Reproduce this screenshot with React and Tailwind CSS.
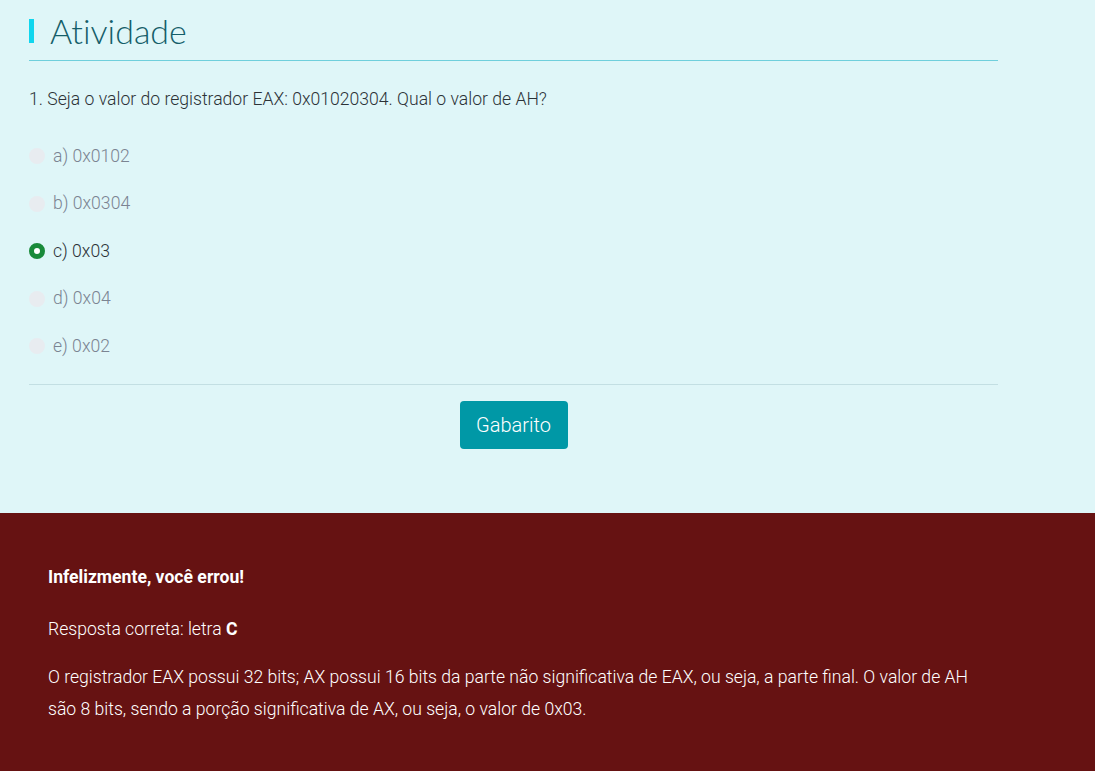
import React from "react";

const options = [
  { label: "a) 0x0102", selected: false },
  { label: "b) 0x0304", selected: false },
  { label: "c) 0x03", selected: true },
  { label: "d) 0x04", selected: false },
  { label: "e) 0x02", selected: false },
];

export default function App() {
  return (
    <div className="min-h-[771px] w-full flex flex-col bg-[#dff6f8]" style={{ fontFamily: "Roboto, 'Liberation Sans', sans-serif" }}>
      <div className="pl-[29px] pt-[11px] pb-[64px]">
        <div className="w-[969px]">
          <div className="flex items-center h-[40px] border-b border-[#6fcfdc] pb-[9px] box-content">
            <span className="w-[5px] h-[24px] bg-[#10d6ee] mr-[16px]"></span>
            <h1 className="text-[34px] leading-[40px] text-[#155e6a] [font-variant-ligatures:none]" style={{ fontFamily: "Lato, 'Open Sans', sans-serif", fontWeight: 300 }}>Atividade</h1>
          </div>
          <p className="mt-[26px] text-[17.6px] leading-[24px] font-light text-[#2c3237]">
            1. Seja o valor do registrador EAX: 0x01020304. Qual o valor de AH?
          </p>
          <div className="mt-[33px] flex flex-col gap-[23.5px] pb-[26px] border-b border-[#c3dfe3]">
            {options.map((o) => (
              <label key={o.label} className="flex items-center h-[24px]">
                {o.selected ? (
                  <span className="w-[16px] h-[16px] rounded-full border-[5px] border-[#198a3a] bg-white"></span>
                ) : (
                  <span className="w-[16px] h-[16px] rounded-full bg-[#e8ecf0]"></span>
                )}
                <span className={"ml-[8px] text-[17.6px] font-light " + (o.selected ? "text-[#2c3237]" : "text-[#7b8492]")}>{o.label}</span>
              </label>
            ))}
          </div>
          <div className="flex justify-center mt-[16px]">
            <button className="w-[108px] h-[48px] rounded-[4px] bg-[#0098a6] text-white text-[20px] font-light">Gabarito</button>
          </div>
        </div>
      </div>
      <div className="flex-1 bg-[#661212] pl-[48px] pt-[52px] pb-[40px] text-white text-[17.6px]">
        <p className="font-bold leading-[24px]">Infelizmente, você errou!</p>
        <p className="mt-[28px] font-light leading-[24px]">Resposta correta: letra <b className="font-bold">C</b></p>
        <p className="mt-[20px] font-light leading-[32px] w-[940px]">
          O registrador EAX possui 32 bits; AX possui 16 bits da parte não significativa de EAX, ou seja, a parte final. O valor de AH são 8 bits, sendo a porção significativa de AX, ou seja, o valor de 0x03.
        </p>
      </div>
    </div>
  );
}
